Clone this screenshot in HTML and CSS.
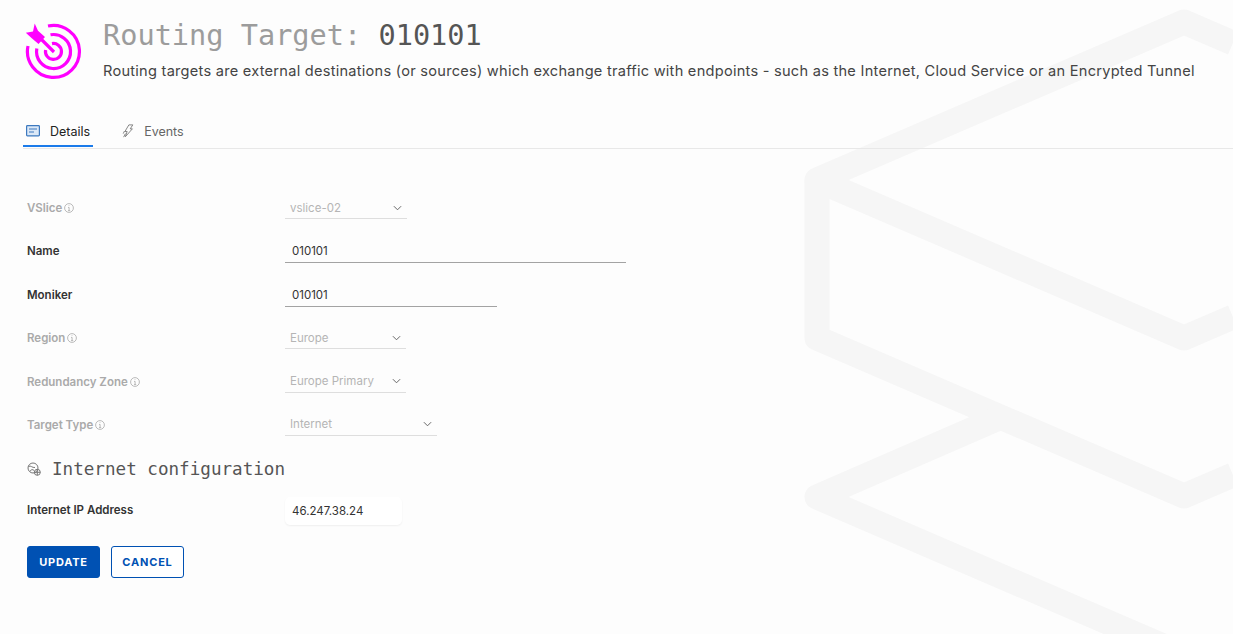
FILE: index.html
```html
<!DOCTYPE html>
<html lang="en">
<head>
    <meta charset="UTF-8">
    <meta name="viewport" content="width=device-width, initial-scale=1.0">
    <title>Routing Target: 010101</title>
    <link rel="stylesheet" href="styles.css">
</head>
<body>
    <svg class="backdrop" viewBox="0 0 1233 634" aria-hidden="true">
        <path d="M1233 43 L1184 22 L817 180 L1184 338 L1233 317"/>
        <path d="M817 180 L817 338 L1184 496 L1233 475"/>
        <path d="M1001 417 L817 497 L1184 655"/>
    </svg>

    <div class="page">
        <header class="header">
            <svg class="logo" viewBox="24 22 60 60" aria-hidden="true">
                <g class="logo-rings">
                    <path d="M48 26 A26 26 0 1 1 28 46"/>
                    <path d="M50.5 34.8 A17 17 0 1 1 36.8 48.5"/>
                    <path d="M52 43.6 A8 8 0 1 1 45.6 50"/>
                    <path d="M40 38 L54 52"/>
                </g>
                <polygon class="logo-flight" points="34.7,23.5 38,30.7 45,37 38.5,44 31.5,38 25.8,32.7 33,31.5"/>
            </svg>
            <div class="header-text">
                <h1><span class="title-muted">Routing Target:</span> 010101</h1>
                <p>Routing targets are external destinations (or sources) which exchange traffic with endpoints - such as the Internet, Cloud Service or an Encrypted Tunnel</p>
            </div>
        </header>

        <nav class="tabs">
            <a class="tab active">
                <svg class="tab-icon" viewBox="0 0 14 12" aria-hidden="true">
                    <rect class="details-box" x="0.6" y="0.6" width="12.8" height="10.3" rx="0.8"/>
                    <path class="details-lines" d="M3 4 H11 M3 7 H8"/>
                </svg>
                Details
            </a>
            <a class="tab">
                <svg class="tab-icon" viewBox="0 0 14 16" aria-hidden="true">
                    <path class="events-bolt" d="M8 1 L12.5 1 L9.5 5.5 L12 5.5 L4 14.5 L6 8.5 L3.5 8.5 Z M2 15 L4 11 M1.5 11 L3 8"/>
                </svg>
                Events
            </a>
        </nav>

        <form class="form">
            <div class="row disabled">
                <label>VSlice <svg class="info" viewBox="0 0 10 10"><circle cx="5" cy="5" r="4.4"/><path d="M4 4.4 H5.1 V7.6 M4 7.6 H6.2 M5 2.4 V3"/></svg></label>
                <div class="field select w-122">vslice-02<svg class="chevron" viewBox="0 0 10 6"><path d="M1 1 L5 5 L9 1"/></svg></div>
            </div>
            <div class="row">
                <label>Name</label>
                <div class="field w-341">010101</div>
            </div>
            <div class="row">
                <label>Moniker</label>
                <div class="field w-212">010101</div>
            </div>
            <div class="row disabled">
                <label>Region <svg class="info" viewBox="0 0 10 10"><circle cx="5" cy="5" r="4.4"/><path d="M4 4.4 H5.1 V7.6 M4 7.6 H6.2 M5 2.4 V3"/></svg></label>
                <div class="field select w-121">Europe<svg class="chevron" viewBox="0 0 10 6"><path d="M1 1 L5 5 L9 1"/></svg></div>
            </div>
            <div class="row disabled">
                <label>Redundancy Zone <svg class="info" viewBox="0 0 10 10"><circle cx="5" cy="5" r="4.4"/><path d="M4 4.4 H5.1 V7.6 M4 7.6 H6.2 M5 2.4 V3"/></svg></label>
                <div class="field select w-121">Europe Primary<svg class="chevron" viewBox="0 0 10 6"><path d="M1 1 L5 5 L9 1"/></svg></div>
            </div>
            <div class="row disabled">
                <label>Target Type <svg class="info" viewBox="0 0 10 10"><circle cx="5" cy="5" r="4.4"/><path d="M4 4.4 H5.1 V7.6 M4 7.6 H6.2 M5 2.4 V3"/></svg></label>
                <div class="field select w-152">Internet<svg class="chevron" viewBox="0 0 10 6"><path d="M1 1 L5 5 L9 1"/></svg></div>
            </div>

            <h2 class="section">
                <svg class="section-icon" viewBox="0 0 14 14" aria-hidden="true">
                    <circle cx="6" cy="6" r="5"/>
                    <path d="M1.5 4.5 C4 3 5 6 8 5.5 M3 9.5 C3.5 7.5 6 7 7 8.5"/>
                    <circle cx="10.3" cy="10.3" r="3"/>
                    <path d="M7.3 10.3 H13.3 M10.3 7.3 V13.3"/>
                </svg>
                Internet configuration
            </h2>

            <div class="row row-ip">
                <label>Internet IP Address</label>
                <div class="field boxed">46.247.38.24</div>
            </div>

            <div class="actions">
                <button type="button" class="btn primary">UPDATE</button>
                <button type="button" class="btn outline">CANCEL</button>
            </div>
        </form>
    </div>
</body>
</html>
```

FILE: styles.css
```css
html, body {
    height: 100%;
}
body {
    font-family: 'Inter', 'Open Sans', sans-serif;
    background-color: #fdfdfd;
    color: #333;
    margin: 0;
    overflow: hidden;
}
.backdrop {
    position: absolute;
    top: 0;
    left: 0;
    width: 1233px;
    height: 634px;
    fill: none;
    stroke: #f6f6f6;
    stroke-width: 25;
    stroke-linejoin: round;
}
.page {
    position: relative;
    padding-top: 18px;
}

/* header */
.header {
    display: flex;
    padding-left: 24px;
    height: 99px;
}
.logo {
    width: 60px;
    height: 60px;
    margin-top: 4px;
}
.logo-rings {
    fill: none;
    stroke: #ff00ff;
    stroke-width: 3.2;
}
.logo-flight {
    fill: #ff00ff;
}
.header-text {
    margin-left: 19px;
}
h1 {
    font-family: 'DejaVu Sans Mono', monospace;
    font-size: 28.6px;
    font-weight: 400;
    line-height: 34px;
    margin: 0;
    color: #555;
}
.title-muted {
    color: #9c9c9c;
}
.header-text p {
    font-size: 14.6px;
    letter-spacing: 0.25px;
    line-height: 20px;
    margin: 9px 0 0;
    color: #444;
    white-space: nowrap;
}

/* tabs */
.tabs {
    display: flex;
    margin-left: 23px;
    height: 31px;
    border-bottom: 1px solid #e8e8e8;
}
.tab {
    display: flex;
    align-items: center;
    gap: 9px;
    height: 28px;
    padding: 0 3px;
    margin-right: 25px;
    font-size: 12.5px;
    color: #666;
}
.tab.active {
    color: #222;
    gap: 10px;
    border-bottom: 2px solid #1b7bea;
}
.tab-icon {
    width: 14px;
    height: 14px;
}
.details-box {
    fill: #dbe8f7;
    stroke: #3d79bf;
    stroke-width: 1.2;
}
.details-lines {
    fill: none;
    stroke: #3d79bf;
    stroke-width: 1.2;
}
.events-bolt {
    fill: none;
    stroke: #777;
    stroke-width: 1;
}

/* form */
.form {
    padding: 48px 0 0 27px;
}
.row {
    display: flex;
    align-items: flex-start;
    height: 43.4px;
}
label {
    display: flex;
    align-items: center;
    gap: 2px;
    width: 258px;
    height: 22px;
    font-size: 11.5px;
    font-weight: 600;
    color: #333;
}
.field {
    box-sizing: border-box;
    display: flex;
    align-items: center;
    justify-content: space-between;
    height: 23px;
    padding: 0 8px 0 7px;
    border-bottom: 1px solid #a3a3a3;
    font-size: 11.5px;
    color: #333;
}
.w-122 { width: 122px; }
.w-121 { width: 121px; }
.w-152 { width: 152px; }
.w-212 { width: 212px; }
.w-341 { width: 341px; }
.disabled label {
    color: #aaa;
}
.disabled .field {
    height: 22px;
    border-bottom-color: #dedede;
    color: #b5b5b5;
    padding: 0 5px;
}
.info {
    width: 10px;
    height: 10px;
    fill: none;
    stroke: #aaa;
    stroke-width: 0.8;
}
.chevron {
    width: 9px;
    height: 6px;
    fill: none;
    stroke: #666;
    stroke-width: 1.1;
}
.section {
    display: flex;
    align-items: center;
    gap: 11px;
    height: 24px;
    margin: 0 0 17px;
    font-family: 'DejaVu Sans Mono', monospace;
    font-size: 17.6px;
    font-weight: 400;
    color: #555;
}
.section-icon {
    width: 14px;
    height: 14px;
    fill: none;
    stroke: #777;
    stroke-width: 1;
}
.row-ip {
    height: 48px;
}
.boxed {
    width: 117px;
    height: 28px;
    border: none;
    border-radius: 5px;
    background: #fff;
    box-shadow: 0 1px 2px rgba(0, 0, 0, 0.06);
    margin-top: -1px;
}
.row-ip label {
    height: 24px;
}
.actions {
    display: flex;
    gap: 11px;
}
.btn {
    box-sizing: border-box;
    height: 32px;
    width: 73px;
    border-radius: 3px;
    border: 1px solid #0051b3;
    font-family: inherit;
    font-size: 11px;
    font-weight: 700;
    letter-spacing: 0.8px;
}
.primary {
    background-color: #0051b3;
    color: #fff;
}
.outline {
    background-color: #fff;
    color: #0051b3;
}
```
